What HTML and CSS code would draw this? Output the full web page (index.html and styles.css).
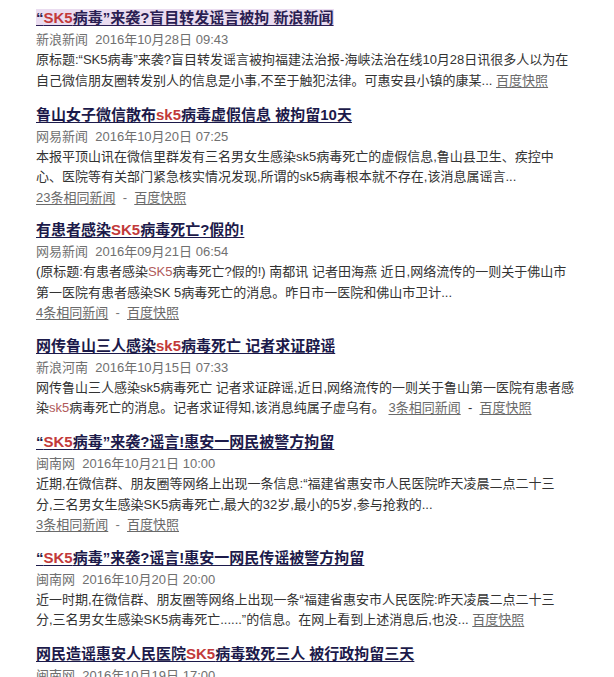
FILE: index.html
```html
<!DOCTYPE html>
<html lang="zh-CN">
<head>
<meta charset="utf-8">
<title>SK5病毒 新闻</title>
<link rel="stylesheet" href="styles.css">
</head>
<body>
<div class="results">
  <div class="item">
    <div class="title"><a class="visited">“<em>SK5</em>病毒”来袭?盲目转发谣言被拘 新浪新闻</a></div>
    <div class="meta">新浪新闻&nbsp;&nbsp;2016年10月28日 09:43</div>
    <div class="body">原标题:“SK5病毒”来袭?盲目转发谣言被拘福建法治报-海峡法治在线10月28日讯很多人以为在<br>自己微信朋友圈转发别人的信息是小事,不至于触犯法律。可惠安县小镇的康某... <a class="lnk">百度快照</a></div>
  </div>
  <div class="item">
    <div class="title"><a>鲁山女子微信散布<em>sk5</em>病毒虚假信息 被拘留10天</a></div>
    <div class="meta">网易新闻&nbsp;&nbsp;2016年10月20日 07:25</div>
    <div class="body">本报平顶山讯在微信里群发有三名男女生感染sk5病毒死亡的虚假信息,鲁山县卫生、疾控中<br>心、医院等有关部门紧急核实情况发现,所谓的sk5病毒根本就不存在,该消息属谣言...</div>
    <div class="links"><a class="lnk">23条相同新闻</a>&nbsp; - &nbsp;<a class="lnk">百度快照</a></div>
  </div>
  <div class="item">
    <div class="title"><a>有患者感染<em>SK5</em>病毒死亡?假的!</a></div>
    <div class="meta">网易新闻&nbsp;&nbsp;2016年09月21日 06:54</div>
    <div class="body">(原标题:有患者感染<span class="hl">SK5</span>病毒死亡?假的!) 南都讯 记者田海燕 近日,网络流传的一则关于佛山市<br>第一医院有患者感染SK 5病毒死亡的消息。昨日市一医院和佛山市卫计...</div>
    <div class="links"><a class="lnk">4条相同新闻</a>&nbsp; - &nbsp;<a class="lnk">百度快照</a></div>
  </div>
  <div class="item">
    <div class="title"><a>网传鲁山三人感染<em>sk5</em>病毒死亡 记者求证辟谣</a></div>
    <div class="meta">新浪河南&nbsp;&nbsp;2016年10月15日 07:33</div>
    <div class="body">网传鲁山三人感染sk5病毒死亡 记者求证辟谣,近日,网络流传的一则关于鲁山第一医院有患者感<br>染<span class="hl">sk5</span>病毒死亡的消息。记者求证得知,该消息纯属子虚乌有。 <a class="lnk">3条相同新闻</a>&nbsp; - &nbsp;<a class="lnk">百度快照</a></div>
  </div>
  <div class="item">
    <div class="title"><a>“<em>SK5</em>病毒”来袭?谣言!惠安一网民被警方拘留</a></div>
    <div class="meta">闽南网&nbsp;&nbsp;2016年10月21日 10:00</div>
    <div class="body">近期,在微信群、朋友圈等网络上出现一条信息:“福建省惠安市人民医院昨天凌晨二点二十三<br>分,三名男女生感染SK5病毒死亡,最大的32岁,最小的5岁,参与抢救的...</div>
    <div class="links"><a class="lnk">3条相同新闻</a>&nbsp; - &nbsp;<a class="lnk">百度快照</a></div>
  </div>
  <div class="item">
    <div class="title"><a>“<em>SK5</em>病毒”来袭?谣言!惠安一网民传谣被警方拘留</a></div>
    <div class="meta">闽南网&nbsp;&nbsp;2016年10月20日 20:00</div>
    <div class="body">近一时期,在微信群、朋友圈等网络上出现一条“福建省惠安市人民医院:昨天凌晨二点二十三<br>分,三名男女生感染SK5病毒死亡......”的信息。在网上看到上述消息后,也没... <a class="lnk">百度快照</a></div>
  </div>
  <div class="item">
    <div class="title"><a>网民造谣惠安人民医院<em>SK5</em>病毒致死三人 被行政拘留三天</a></div>
    <div class="meta">闽南网&nbsp;&nbsp;2016年10月19日 17:00</div>
  </div>
</div>
</body>
</html>
```
FILE: styles.css
```css
html, body {
  margin: 0;
  padding: 0;
  background: #ffffff;
}
body {
  font-family: "Liberation Sans", "Noto Sans CJK SC", sans-serif;
  color: #333333;
  width: 614px;
  height: 677px;
  overflow: hidden;
}
.results {
  padding: 7px 0 0 36px;
  display: flex;
  flex-direction: column;
  gap: 12.5px;
}
.item {
  display: flex;
  flex-direction: column;
}
.title {
  font-size: 15px;
  line-height: 22px;
  font-weight: bold;
  white-space: nowrap;
}
.title a {
  color: #1c1a4a;
  text-decoration: underline;
  text-decoration-thickness: 1px;
  text-underline-offset: 2px;
}
.title a.visited {
  background: #eadcf0;
  color: #2a1e52;
}
.title em {
  font-style: normal;
  color: #c23a3a;
}
.meta {
  font-size: 13px;
  line-height: 21px;
  color: #707070;
  white-space: nowrap;
}
.body {
  font-size: 13px;
  line-height: 20.5px;
  color: #333333;
  white-space: nowrap;
}
.body .hl {
  color: #b05a5a;
}
.links {
  font-size: 13px;
  line-height: 19px;
  color: #777777;
}
.lnk {
  color: #6a6a6a;
  text-decoration: underline;
  text-underline-offset: 2px;
}
```
